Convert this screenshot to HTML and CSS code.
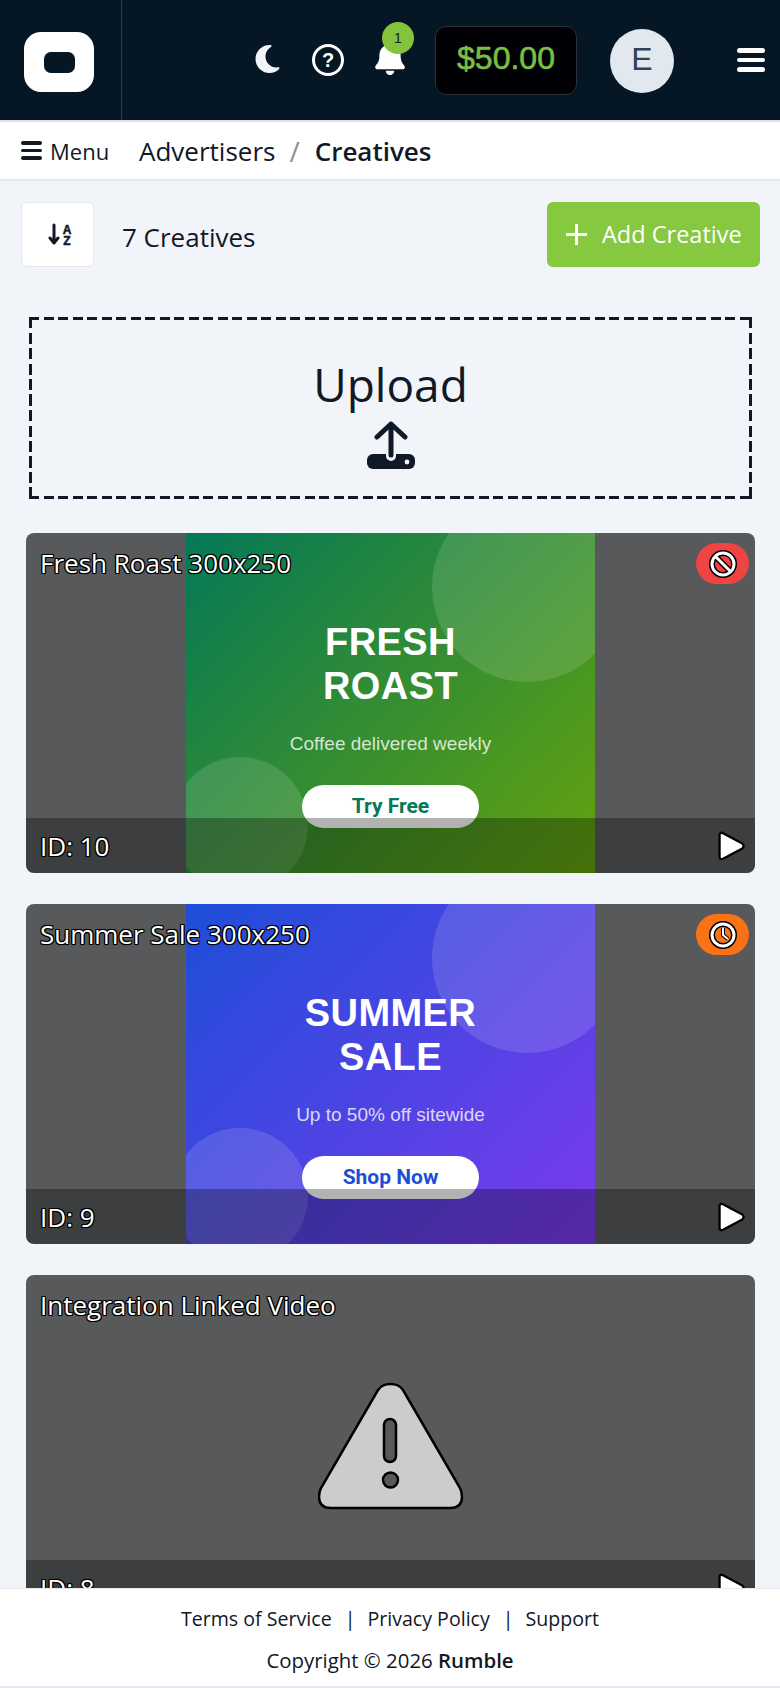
FILE: index.html
```html
<!DOCTYPE html>
<html lang="en">

<head>
    <meta charset="UTF-8">
    <meta name="viewport" content="width=device-width, initial-scale=1.0">
    <title>Creatives</title>
    <link rel="stylesheet" href="styles.css">
</head>

<body>
    <header class="topbar">
        <div class="logo-cell">
            <div class="logo"><span class="logo-hole"></span></div>
        </div>
        <div class="top-actions">
            <svg class="moon" viewBox="0 0 384 512"><path d="M223.5 32C100 32 0 132.3 0 256S100 480 223.5 480c60.6 0 115.5-24.2 155.8-63.4c5-4.9 6.3-12.5 3.1-18.7s-10.1-9.7-17-8.5c-9.8 1.7-19.8 2.6-30.1 2.6c-96.9 0-175.5-78.8-175.5-176c0-65.8 36-123.1 89.3-153.3c6.1-3.5 9.2-10.5 7.7-17.3s-7.3-11.9-14.3-12.5c-6.3-.5-12.6-.8-19-.8z"/></svg>
            <span class="help">?</span>
            <div class="bell-wrap">
                <svg class="bell" viewBox="0 0 448 512"><path d="M224 0c-17.7 0-32 14.3-32 32V51.2C119 66 64 130.6 64 212.8V232c0 48.3-17.3 94.9-48.5 131.1l-7.4 8.5c-8.4 9.7-10.4 23.3-5 34.9S20.1 425 32.9 425H415.1c12.8 0 24.4-7.5 29.6-19.1s3.4-25.2-5-34.9l-7.4-8.5C401.3 326.9 384 280.3 384 232V212.8c0-82.2-55-146.8-128-161.6V32c0-17.7-14.3-32-32-32zm45.3 493.3c12-12 18.7-28.3 18.7-45.3H160c0 17 6.7 33.3 18.7 45.3s28.3 18.7 45.3 18.7s33.3-6.7 45.3-18.7z"/></svg>
                <span class="bell-count">1</span>
            </div>
            <div class="balance">$50.00</div>
            <div class="avatar">E</div>
            <div class="burger"><span></span><span></span><span></span></div>
        </div>
    </header>

    <nav class="crumbs">
        <div class="menu-toggle">
            <div class="menu-icon"><span></span><span></span><span></span></div>
            Menu
        </div>
        <span class="crumb">Advertisers</span>
        <span class="crumb-sep">/</span>
        <span class="crumb crumb-current">Creatives</span>
    </nav>

    <main class="maincontent">
        <div class="toolbar">
            <button class="sort-btn">
                <svg class="sort-icon" viewBox="0 0 26 26">
                    <path d="M6 3v18M2 16l4 5 4-5" fill="none" stroke="#111827" stroke-width="3" stroke-linecap="round" stroke-linejoin="round"/>
                    <text x="19" y="12" class="sort-letter">A</text>
                    <text x="19" y="23" class="sort-letter">Z</text>
                </svg>
            </button>
            <span class="count">7 Creatives</span>
            <button class="add-btn"><span class="plus"></span>Add Creative</button>
        </div>

        <section class="upload">
            <div class="upload-label">Upload</div>
            <svg class="upload-icon" viewBox="0 0 50 48">
                <rect x="1" y="33" width="48" height="15" rx="6"/>
                <path d="M25 3v32M11 16L25 3l14 13" fill="none" stroke="#f1f4f9" stroke-width="10" stroke-linecap="round" stroke-linejoin="round"/>
                <path d="M25 3v31M11 16L25 3l14 13" fill="none" stroke="#111827" stroke-width="5" stroke-linecap="round" stroke-linejoin="round"/>
                <circle cx="41" cy="41" r="2.4" fill="#f1f4f9"/>
            </svg>
        </section>

        <article class="card">
            <div class="ad ad-green">
                <span class="blob blob-top"></span>
                <span class="blob blob-bottom"></span>
                <div class="ad-title">FRESH<br>ROAST</div>
                <div class="ad-sub">Coffee delivered weekly</div>
                <div class="ad-cta cta-green">Try Free</div>
            </div>
            <div class="card-title">Fresh Roast 300x250</div>
            <div class="badge badge-red">
                <svg class="badge-icon" viewBox="0 0 30 30">
                    <circle cx="15" cy="15" r="11" class="outline"/>
                    <path d="M7 7l16 16" class="outline"/>
                    <circle cx="15" cy="15" r="11" class="ink"/>
                    <path d="M7 7l16 16" class="ink"/>
                </svg>
            </div>
            <div class="card-bar">
                <span class="card-id">ID: 10</span>
                <svg class="play" viewBox="0 0 26 28"><path d="M3 4.5Q3 1.500 6 2.800L22.500 11.500Q25.500 14 22.500 16.500L6 25.200Q3 26.500 3 23.500Z"/></svg>
            </div>
        </article>

        <article class="card">
            <div class="ad ad-blue">
                <span class="blob blob-top"></span>
                <span class="blob blob-bottom"></span>
                <div class="ad-title">SUMMER<br>SALE</div>
                <div class="ad-sub">Up to 50% off sitewide</div>
                <div class="ad-cta cta-blue">Shop Now</div>
            </div>
            <div class="card-title">Summer Sale 300x250</div>
            <div class="badge badge-orange">
                <svg class="badge-icon" viewBox="0 0 30 30">
                    <circle cx="15" cy="15" r="11" class="outline"/>
                    <path d="M15 8v7l5 4" class="outline-thin"/>
                    <circle cx="15" cy="15" r="11" class="ink"/>
                    <path d="M15 8v7l5 4" class="ink-thin"/>
                </svg>
            </div>
            <div class="card-bar">
                <span class="card-id">ID: 9</span>
                <svg class="play" viewBox="0 0 26 28"><path d="M3 4.5Q3 1.500 6 2.800L22.500 11.500Q25.500 14 22.500 16.500L6 25.200Q3 26.500 3 23.500Z"/></svg>
            </div>
        </article>

        <article class="card">
            <div class="ad-missing">
                <svg class="warning" viewBox="0 0 146 128">
                    <path d="M60 8Q64 2 72.500 2Q81 2 85 8L142 106Q144 110 144 115Q144 126 132 126H13Q1 126 1 115Q1 110 3 106Z" fill="#cccccc"/>
                    <rect x="66" y="37" width="12" height="43" rx="6" fill="#58595b"/>
                    <circle cx="72.500" cy="98" r="7.500" fill="#58595b"/>
                </svg>
            </div>
            <div class="card-title">Integration Linked Video</div>
            <div class="card-bar">
                <span class="card-id">ID: 8</span>
                <svg class="play" viewBox="0 0 26 28"><path d="M3 4.5Q3 1.500 6 2.800L22.500 11.500Q25.500 14 22.500 16.500L6 25.200Q3 26.500 3 23.500Z"/></svg>
            </div>
        </article>
    </main>

    <footer class="site-footer">
        <div class="footer-links">
            <span>Terms of Service</span><span class="pipe">|</span><span>Privacy Policy</span><span class="pipe">|</span><span>Support</span>
        </div>
        <div class="footer-copy">Copyright © 2026 <strong>Rumble</strong></div>
    </footer>
</body>

</html>
```

FILE: styles.css
```css
* {
    box-sizing: border-box;
    margin: 0;
    padding: 0;
}

html,
body {
    height: 100%;
}

body {
    display: flex;
    flex-direction: column;
    overflow: hidden;
    background: #f1f4f9;
    color: #111827;
    font-family: "Open Sans", "Noto Sans", sans-serif;
}

/* top bar */
.topbar {
    display: flex;
    flex: none;
    height: 120px;
    background: #051625;
}

.logo-cell {
    display: flex;
    align-items: center;
    width: 122px;
    padding: 4px 0 0 24px;
    border-right: 1px solid #2b3a48;
}

.logo {
    display: flex;
    align-items: center;
    justify-content: center;
    width: 70px;
    height: 60px;
    border-radius: 17px;
    background: #fff;
}

.logo-hole {
    width: 31px;
    height: 21px;
    border-radius: 7px;
    background: #051625;
}

.top-actions {
    display: flex;
    flex: 1;
    align-items: center;
    justify-content: flex-end;
    gap: 31px;
    padding-right: 15px;
}

.moon {
    width: 27px;
    height: 32px;
    margin-top: -2px;
    fill: #f1f5f9;
}

.help {
    display: flex;
    align-items: center;
    justify-content: center;
    width: 32px;
    height: 32px;
    border: 3px solid #fff;
    border-radius: 50%;
    color: #fff;
    font-family: "Liberation Sans", sans-serif;
    font-size: 20px;
    font-weight: bold;
}

.bell-wrap {
    position: relative;
    width: 30px;
    height: 34px;
    margin-top: -4px;
}

.bell {
    display: block;
    width: 30px;
    height: 34px;
    fill: #fff;
}

.bell-count {
    position: absolute;
    top: -19px;
    left: 7px;
    width: 32px;
    height: 32px;
    border-radius: 50%;
    background: #84c43d;
    color: #111827;
    font-family: "Liberation Sans", sans-serif;
    font-size: 14px;
    line-height: 32px;
    text-align: center;
}

.balance {
    width: 142px;
    height: 69px;
    margin-left: -1px;
    border: 1px solid #2c3036;
    border-radius: 11px;
    background: #000005;
    color: #78c042;
    font-family: "Liberation Sans", sans-serif;
    font-size: 32px;
    -webkit-text-stroke: 0.6px #78c042;
    line-height: 63px;
    text-align: center;
}

.avatar {
    width: 64px;
    height: 64px;
    margin: 2px 0 0 2px;
    border-radius: 50%;
    background: #e2e8f0;
    color: #334155;
    font-family: "Liberation Sans", sans-serif;
    font-size: 32px;
    line-height: 60px;
    text-align: center;
}

.burger {
    display: flex;
    flex-direction: column;
    gap: 5px;
    width: 28px;
    margin-left: 32px;
}

.burger span {
    height: 4.5px;
    border-radius: 3px;
    background: #fff;
}

/* breadcrumb row */
.crumbs {
    display: flex;
    flex: none;
    align-items: center;
    height: 61px;
    padding-left: 21px;
    border-top: 2px solid #dcdfe3;
    border-bottom: 2px solid #e5e7eb;
    background: #fff;
}

.menu-toggle {
    display: flex;
    align-items: center;
    gap: 8px;
    width: 118px;
    font-size: 22px;
}

.menu-icon {
    display: flex;
    flex-direction: column;
    gap: 4px;
    width: 21px;
}

.menu-icon span {
    height: 3.5px;
    border-radius: 2px;
    background: #111827;
}

.crumb {
    font-size: 26px;
}

.crumb-sep {
    margin: 0 15px 0 14px;
    color: #8b9099;
    font-size: 28px;
}

.crumb-current {
    font-weight: 600;
}

/* page */
.maincontent {
    flex: 1;
    min-height: 0;
    overflow: hidden;
}

.toolbar {
    display: flex;
    align-items: center;
    padding: 21px 20px 0 21px;
}

.sort-btn {
    display: flex;
    align-items: center;
    justify-content: center;
    width: 73px;
    height: 65px;
    padding-left: 6px;
    border: 1px solid #e5e7eb;
    border-radius: 6px;
    background: #fff;
}

.sort-icon {
    width: 26px;
    height: 26px;
}

.sort-letter {
    fill: #111827;
    stroke: #111827;
    stroke-width: 0.5;
    font-family: "Liberation Sans", sans-serif;
    font-size: 12px;
    font-weight: bold;
    text-anchor: middle;
}

.count {
    margin: 4px 0 0 28px;
    font-size: 26px;
}

.add-btn {
    display: flex;
    align-items: center;
    margin-left: auto;
    width: 213px;
    height: 65px;
    padding: 0 0 2px 19px;
    border: 0;
    border-radius: 6px;
    background: #86c83f;
    color: #fff;
    font-family: inherit;
    font-size: 23.5px;
}

.plus {
    width: 21px;
    height: 21px;
    margin: 2px 15px 0 0;
    background:
        linear-gradient(#fff, #fff) center / 100% 3px no-repeat,
        linear-gradient(#fff, #fff) center / 3px 100% no-repeat;
}

.upload {
    display: flex;
    flex-direction: column;
    align-items: center;
    height: 182px;
    margin: 50px 28px 0 29px;
    padding-top: 35px;
    background:
        repeating-linear-gradient(90deg, #111827 0 10px, transparent 10px 14.5px) top / 100% 3px no-repeat,
        repeating-linear-gradient(90deg, #111827 0 10px, transparent 10px 14.5px) bottom / 100% 3px no-repeat,
        repeating-linear-gradient(#111827 0 11px, transparent 11px 15.500px) left / 3px 100% no-repeat,
        repeating-linear-gradient(#111827 0 11px, transparent 11px 15.500px) right / 3px 100% no-repeat;
}

.upload-label {
    font-size: 46px;
    line-height: 64px;
}

.upload-icon {
    width: 50px;
    height: 48px;
    margin-top: 5px;
    fill: #111827;
}

/* creative cards */
.card {
    position: relative;
    height: 340px;
    margin: 34px 25px 31px 26px;
    overflow: hidden;
    border-radius: 8px;
    background: #58595b;
}

.card + .card {
    margin-top: 0;
}

.ad {
    position: relative;
    display: flex;
    flex-direction: column;
    align-items: center;
    width: 409px;
    height: 340px;
    margin: 0 auto;
    padding-top: 88px;
    overflow: hidden;
    font-family: "Liberation Sans", sans-serif;
    color: #fff;
}

.ad-green {
    background: linear-gradient(135deg, #047857, #65a30d);
}

.ad-blue {
    background: linear-gradient(135deg, #1d4ed8, #7c3aed);
}

.blob {
    position: absolute;
    border-radius: 50%;
    background: rgba(255, 255, 255, 0.13);
}

.blob-top {
    top: -41px;
    right: -27px;
    width: 190px;
    height: 190px;
}

.blob-bottom {
    bottom: -20px;
    left: -14px;
    width: 136px;
    height: 136px;
}

.ad-title {
    position: relative;
    font-size: 38px;
    font-weight: bold;
    letter-spacing: 0.4px;
    line-height: 43.5px;
    text-align: center;
}

.ad-sub {
    position: relative;
    margin-top: 25px;
    color: rgba(255, 255, 255, 0.8);
    font-size: 19px;
    line-height: 22px;
}

.ad-cta {
    position: relative;
    width: 177px;
    height: 43px;
    margin-top: 30px;
    border-radius: 22px;
    background: #fff;
    font-family: "Roboto", sans-serif;
    font-size: 21px;
    font-weight: 700;
    line-height: 43px;
    text-align: center;
}

.cta-green {
    color: #047857;
}

.cta-blue {
    color: #1d4ed8;
}

.ad-missing {
    display: flex;
    justify-content: center;
    padding-top: 107px;
}

.warning {
    width: 146px;
    height: 128px;
}

.warning path,
.warning rect,
.warning circle {
    stroke: #000;
    stroke-width: 2.5;
}

.card-title,
.card-id {
    color: #fff;
    font-size: 26px;
    text-shadow: 1px 0 0 #000, -1px 0 0 #000, 0 1px 0 #000, 0 -1px 0 #000, 1px 1px 0 #000, -1px -1px 0 #000, 1px -1px 0 #000, -1px 1px 0 #000, 0 0 2px #000;
}

.card-title {
    position: absolute;
    top: 12px;
    left: 14px;
}

.badge {
    position: absolute;
    top: 10px;
    right: 6px;
    display: flex;
    align-items: center;
    justify-content: center;
    width: 53px;
    height: 41px;
    border-radius: 21px;
}

.badge-red {
    background: #ef4444;
}

.badge-orange {
    background: #f97316;
}

.badge-icon {
    width: 30px;
    height: 30px;
    fill: none;
}

.outline {
    stroke: #000;
    stroke-width: 6;
}

.outline-thin {
    stroke: #000;
    stroke-width: 4;
}

.ink {
    stroke: #fff;
    stroke-width: 3;
}

.ink-thin {
    stroke: #fff;
    stroke-width: 2;
}

.card-bar {
    position: absolute;
    right: 0;
    bottom: 0;
    left: 0;
    display: flex;
    align-items: center;
    justify-content: space-between;
    height: 55px;
    padding: 0 9px 0 14px;
    background: rgba(0, 0, 0, 0.3);
}

.play {
    width: 30px;
    height: 32px;
    fill: #fff;
    stroke: #000;
    stroke-width: 2;
    stroke-linejoin: round;
}

/* footer */
.site-footer {
    flex: none;
    height: 100px;
    padding-top: 14px;
    border-top: 1px solid #e5e7eb;
    border-bottom: 2px solid #e5e7eb;
    background: #fff;
    font-size: 19.6px;
    text-align: center;
}

.footer-links {
    line-height: 32px;
}

.pipe {
    margin: 0 12px 0 13px;
}

.footer-copy {
    margin-top: 9px;
    font-size: 20.4px;
    line-height: 32px;
}

.footer-copy strong {
    font-weight: 600;
}
```
